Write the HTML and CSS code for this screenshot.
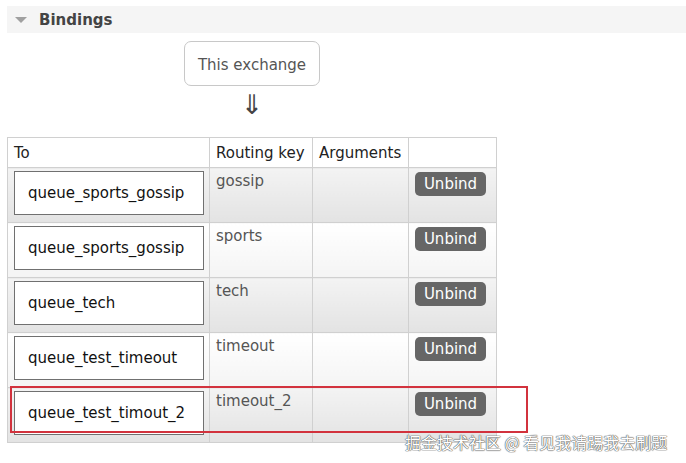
FILE: index.html
```html
<!DOCTYPE html>
<html>
<head>
<meta charset="utf-8">
<link rel="stylesheet" href="styles.css">
</head>
<body>
<div class="page">
  <div class="section-head">
    <span class="toggle"></span>
    <h2 class="title">Bindings</h2>
  </div>
  <div class="diagram">
    <div class="exchange">This exchange</div>
    <div class="arrow">⇓</div>
  </div>
  <table class="bindings">
    <thead>
      <tr>
        <th class="c-to">To</th>
        <th class="c-key">Routing key</th>
        <th class="c-args">Arguments</th>
        <th class="c-act"></th>
      </tr>
    </thead>
    <tbody>
      <tr class="alt1">
        <td><div class="queue">queue_sports_gossip</div></td>
        <td class="key">gossip</td>
        <td></td>
        <td><button class="unbind">Unbind</button></td>
      </tr>
      <tr class="alt2">
        <td><div class="queue">queue_sports_gossip</div></td>
        <td class="key">sports</td>
        <td></td>
        <td><button class="unbind">Unbind</button></td>
      </tr>
      <tr class="alt1">
        <td><div class="queue">queue_tech</div></td>
        <td class="key">tech</td>
        <td></td>
        <td><button class="unbind">Unbind</button></td>
      </tr>
      <tr class="alt2">
        <td><div class="queue">queue_test_timeout</div></td>
        <td class="key">timeout</td>
        <td></td>
        <td><button class="unbind">Unbind</button></td>
      </tr>
      <tr class="alt1">
        <td><div class="queue">queue_test_timout_2</div></td>
        <td class="key">timeout_2</td>
        <td></td>
        <td><button class="unbind">Unbind</button></td>
      </tr>
    </tbody>
  </table>
  <div class="highlight"></div>
  <div class="watermark">掘金技术社区 @ 看见我请踢我去刷题</div>
</div>
</body>
</html>
```

FILE: styles.css
```css
html, body {
  margin: 0;
  padding: 0;
  background: #fff;
}
body {
  font-family: "DejaVu Sans", Verdana, sans-serif;
  font-size: 15px;
  color: #222;
}
.page {
  position: relative;
  padding: 6px 0 0 7px;
  height: 457px;
}
.section-head {
  height: 27px;
  background: #f5f5f5;
  display: flex;
  align-items: center;
  gap: 12px;
  padding-left: 8px;
}
.toggle {
  width: 0;
  height: 0;
  border-left: 6px solid transparent;
  border-right: 6px solid transparent;
  border-top: 6px solid #a0a0a0;
  margin-top: 1px;
}
.title {
  margin: 0;
  font-size: 15px;
  font-weight: bold;
  color: #444;
}
.diagram {
  width: 490px;
  display: flex;
  flex-direction: column;
  align-items: center;
}
.exchange {
  margin-top: 8px;
  border: 1px solid #c8c8c8;
  border-radius: 7px;
  padding: 14px 13px 11px 13px;
  line-height: 18px;
  color: #555;
}
.arrow {
  height: 51px;
  font-size: 27px;
  line-height: 38px;
  color: #444;
}
.bindings {
  border-collapse: collapse;
  border: 1px solid #ccc;
  width: 490px;
  table-layout: fixed;
}
.bindings th,
.bindings td {
  border: 1px solid #d0d0d0;
  text-align: left;
  vertical-align: top;
}
.bindings th {
  font-weight: normal;
  height: 29px;
  padding: 0 6px;
  vertical-align: middle;
  color: #222;
  background: #fff;
}
.c-to { width: 189px; }
.c-key { width: 90px; }
.c-args { width: 83px; }
.bindings td {
  height: 55px;
  padding: 3px 6px 0 6px;
  box-sizing: border-box;
}
.alt1 td {
  background: linear-gradient(#f3f3f3, #e3e3e3);
}
.alt2 td {
  background: linear-gradient(#ffffff, #f4f4f4);
}
.queue {
  width: 188px;
  height: 42px;
  border: 1px solid #707070;
  background: #fff;
  display: flex;
  align-items: center;
  box-sizing: content-box;
  text-indent: 13px;
  color: #111;
}
.key {
  color: #555;
  line-height: 20px;
}
.unbind {
  font-family: "DejaVu Sans", Verdana, sans-serif;
  font-size: 15px;
  color: #fff;
  background: #666;
  border: none;
  border-radius: 5px;
  width: 71px;
  height: 24px;
  padding: 0;
  line-height: 24px;
  margin-top: 1px;
}
.highlight {
  position: absolute;
  left: 10px;
  top: 386px;
  width: 514px;
  height: 43px;
  border: 2px solid #d2323d;
}
.watermark {
  position: absolute;
  left: 405px;
  top: 430px;
  font-family: "Noto Sans CJK SC", "DejaVu Sans", sans-serif;
  font-size: 16px;
  color: #fff;
  text-shadow: 0 0 1px #555, 0 0 1px #555, 0 0 1px #555;
  letter-spacing: 0;
}
```
